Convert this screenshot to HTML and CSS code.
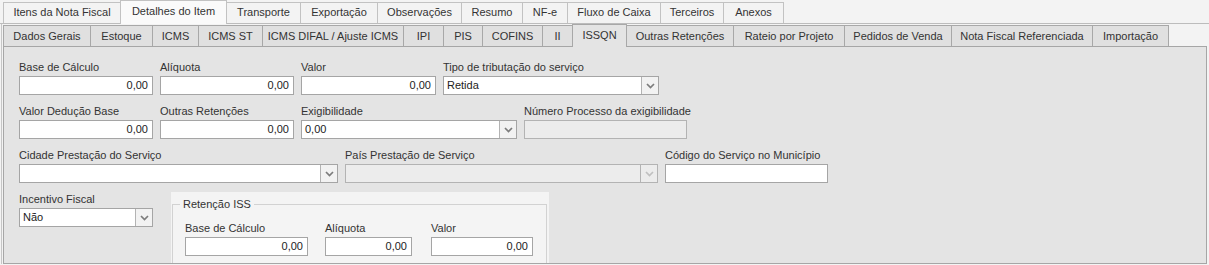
FILE: index.html
```html
<!DOCTYPE html>
<html lang="pt-BR">
  <head>
    <meta charset="UTF-8" />
    <title>Detalhes do Item - ISSQN</title>
    <link rel="stylesheet" href="styles.css">
  </head>
  <body>
    <div class="main-tabs">
      <div class="main-tab w-itens">Itens da Nota Fiscal</div>
      <div class="main-tab active w-detalhes">Detalhes do Item</div>
      <div class="main-tab w-transp">Transporte</div>
      <div class="main-tab w-export">Exportação</div>
      <div class="main-tab w-obs">Observações</div>
      <div class="main-tab w-resumo">Resumo</div>
      <div class="main-tab w-nfe">NF-e</div>
      <div class="main-tab w-fluxo">Fluxo de Caixa</div>
      <div class="main-tab w-terc">Terceiros</div>
      <div class="main-tab w-anexos">Anexos</div>
    </div>

    <div class="outer">
      <div class="inner">
        <div class="sub-tabs">
          <div class="sub-tab w-dados">Dados Gerais</div>
          <div class="sub-tab w-estoque">Estoque</div>
          <div class="sub-tab w-icms">ICMS</div>
          <div class="sub-tab w-icmsst">ICMS ST</div>
          <div class="sub-tab w-difal">ICMS DIFAL / Ajuste ICMS</div>
          <div class="sub-tab w-ipi">IPI</div>
          <div class="sub-tab w-pis">PIS</div>
          <div class="sub-tab w-cofins">COFINS</div>
          <div class="sub-tab w-ii">II</div>
          <div class="sub-tab active w-issqn">ISSQN</div>
          <div class="sub-tab w-outras">Outras Retenções</div>
          <div class="sub-tab w-rateio">Rateio por Projeto</div>
          <div class="sub-tab w-pedidos">Pedidos de Venda</div>
          <div class="sub-tab w-nfref">Nota Fiscal Referenciada</div>
          <div class="sub-tab w-import">Importação</div>
        </div>

        <div class="panel">
          <div class="row">
            <div class="field w134">
              <label>Base de Cálculo</label>
              <div class="input num">0,00</div>
            </div>
            <div class="field w134">
              <label>Alíquota</label>
              <div class="input num">0,00</div>
            </div>
            <div class="field w135">
              <label>Valor</label>
              <div class="input num">0,00</div>
            </div>
            <div class="field w216">
              <label>Tipo de tributação do serviço</label>
              <div class="input combo">
                <span class="combo-text">Retida</span>
                <span class="combo-btn"><svg width="9" height="6" viewBox="0 0 9 6"><polyline points="1,1 4.5,4.5 8,1" /></svg></span>
              </div>
            </div>
          </div>

          <div class="row">
            <div class="field w134">
              <label>Valor Dedução Base</label>
              <div class="input num">0,00</div>
            </div>
            <div class="field w134">
              <label>Outras Retenções</label>
              <div class="input num">0,00</div>
            </div>
            <div class="field w216">
              <label>Exigibilidade</label>
              <div class="input combo">
                <span class="combo-text">0,00</span>
                <span class="combo-btn"><svg width="9" height="6" viewBox="0 0 9 6"><polyline points="1,1 4.5,4.5 8,1" /></svg></span>
              </div>
            </div>
            <div class="field w163">
              <label>Número Processo da exigibilidade</label>
              <div class="input disabled"></div>
            </div>
          </div>

          <div class="row">
            <div class="field w319">
              <label>Cidade Prestação do Serviço</label>
              <div class="input combo">
                <span class="combo-text"></span>
                <span class="combo-btn"><svg width="9" height="6" viewBox="0 0 9 6"><polyline points="1,1 4.5,4.5 8,1" /></svg></span>
              </div>
            </div>
            <div class="field w313">
              <label>País Prestação de Serviço</label>
              <div class="input combo disabled">
                <span class="combo-text"></span>
                <span class="combo-btn"><svg width="9" height="6" viewBox="0 0 9 6"><polyline points="1,1 4.5,4.5 8,1" /></svg></span>
              </div>
            </div>
            <div class="field w163">
              <label>Código do Serviço no Município</label>
              <div class="input"></div>
            </div>
          </div>

          <div class="row last">
            <div class="field w134">
              <label>Incentivo Fiscal</label>
              <div class="input combo">
                <span class="combo-text">Não</span>
                <span class="combo-btn"><svg width="9" height="6" viewBox="0 0 9 6"><polyline points="1,1 4.5,4.5 8,1" /></svg></span>
              </div>
            </div>

            <div class="group">
              <fieldset>
                <legend>Retenção ISS</legend>
                <div class="group-row">
                  <div class="field w123">
                    <label>Base de Cálculo</label>
                    <div class="input num">0,00</div>
                  </div>
                  <div class="field w87 gap17">
                    <label>Alíquota</label>
                    <div class="input num">0,00</div>
                  </div>
                  <div class="field w102 gap19">
                    <label>Valor</label>
                    <div class="input num">0,00</div>
                  </div>
                </div>
              </fieldset>
            </div>
          </div>
        </div>
      </div>
    </div>
  </body>
</html>
```

FILE: styles.css
```css
/* Basic reset */
* {
  margin: 0;
  padding: 0;
  box-sizing: border-box;
}

body {
  font-family: "Liberation Sans", Arial, sans-serif;
  font-size: 11px;
  color: #333;
  background-color: #f3f3f3;
  width: 1209px;
  height: 265px;
  overflow: hidden;
}

/* Top tab strip */
.main-tabs {
  display: flex;
  align-items: flex-end;
  height: 24px;
  padding-left: 3px;
  border-bottom: 1px solid #bcbcbc;
}

.main-tab {
  height: 21px;
  margin-right: -1px;
  border: 1px solid #c2c2c2;
  border-bottom: none;
  background-color: #f3f3f3;
  text-align: center;
  line-height: 19px;
  white-space: nowrap;
}

.main-tab.active {
  position: relative;
  z-index: 1;
  height: 24px;
  margin-bottom: -1px;
  line-height: 21px;
  background-color: #fafafa;
}

.w-itens { width: 118px; }
.w-detalhes { width: 107px; }
.w-transp { width: 75px; }
.w-export { width: 78px; }
.w-obs { width: 85px; }
.w-resumo { width: 62px; }
.w-nfe { width: 46px; }
.w-fluxo { width: 94px; }
.w-terc { width: 64px; }
.w-anexos { width: 61px; }

/* Area under the top tabs */
.outer {
  margin-left: 1px;
  padding-left: 1px;
  padding-right: 2px;
  border-left: 1px solid #c6c6c6;
}

.sub-tabs {
  display: flex;
  align-items: flex-end;
  height: 23px;
  border-bottom: 1px solid #a6a6a6;
}

.sub-tab {
  height: 21px;
  margin-right: -1px;
  border: 1px solid #a8a8a8;
  border-bottom: none;
  background-color: #e0e0e0;
  text-align: center;
  line-height: 20px;
  white-space: nowrap;
}

.sub-tab.active {
  position: relative;
  z-index: 1;
  height: 23px;
  margin-bottom: -1px;
  line-height: 20px;
  background-color: #e4e4e4;
}

.w-dados { width: 88px; }
.w-estoque { width: 63px; }
.w-icms { width: 47px; }
.w-icmsst { width: 65px; }
.w-difal { width: 142px; }
.w-ipi { width: 41px; }
.w-pis { width: 40px; }
.w-cofins { width: 61px; }
.w-ii { width: 31px; }
.w-issqn { width: 55px; }
.w-outras { width: 108px; }
.w-rateio { width: 112px; }
.w-pedidos { width: 108px; }
.w-nfref { width: 142px; }
.w-import { width: 77px; }

/* Panel */
.panel {
  height: 217px;
  padding: 13px 0 0 15px;
  border: 1px solid #a6a6a6;
  border-top: none;
  background-color: #e4e4e4;
  overflow: hidden;
}

.row {
  display: flex;
  gap: 7px;
  margin-bottom: 9px;
}

.row.last {
  margin-bottom: 0;
}

.field {
  display: flex;
  flex-direction: column;
}

.field label {
  line-height: 14px;
  margin-bottom: 2px;
  white-space: nowrap;
}

.w87 { width: 87px; }
.w102 { width: 102px; }
.w123 { width: 123px; }
.w134 { width: 134px; }
.w135 { width: 135px; }
.w163 { width: 163px; }
.w216 { width: 216px; }
.w313 { width: 313px; }
.w319 { width: 319px; }

.input {
  height: 19px;
  padding: 0 4px;
  border: 1px solid #a5a5a5;
  background-color: #fff;
  line-height: 17px;
  color: #222;
  white-space: nowrap;
}

.input.num {
  text-align: right;
}

.input.disabled {
  background-color: #ececec;
  border-color: #b3b3b3;
}

.combo {
  display: flex;
  padding: 0;
}

.combo-text {
  flex: 1;
  padding-left: 3px;
}

.combo-btn {
  width: 17px;
  display: flex;
  justify-content: center;
  align-items: center;
  border-left: 1px solid #b3b3b3;
  background-color: #f2f2f2;
}

.combo-btn polyline {
  fill: none;
  stroke: #7c7c7c;
  stroke-width: 1.7;
}

.combo.disabled .combo-btn {
  background-color: #ececec;
}

.combo.disabled .combo-btn polyline {
  stroke: #c0c0c0;
}

/* Retenção ISS group */
.group {
  width: 378px;
  height: 72px;
  margin-left: 11px;
  padding: 5px 2px 0 1px;
  background-color: #f4f4f4;
  overflow: hidden;
}

.group fieldset {
  height: 90px;
  padding: 10px 12px;
  border: 1px solid #d2d2d2;
}

.group legend {
  margin-left: -5px;
  padding: 0 3px;
  line-height: 14px;
}

.group-row {
  display: flex;
}

.gap17 { margin-left: 17px; }
.gap19 { margin-left: 19px; }
```
